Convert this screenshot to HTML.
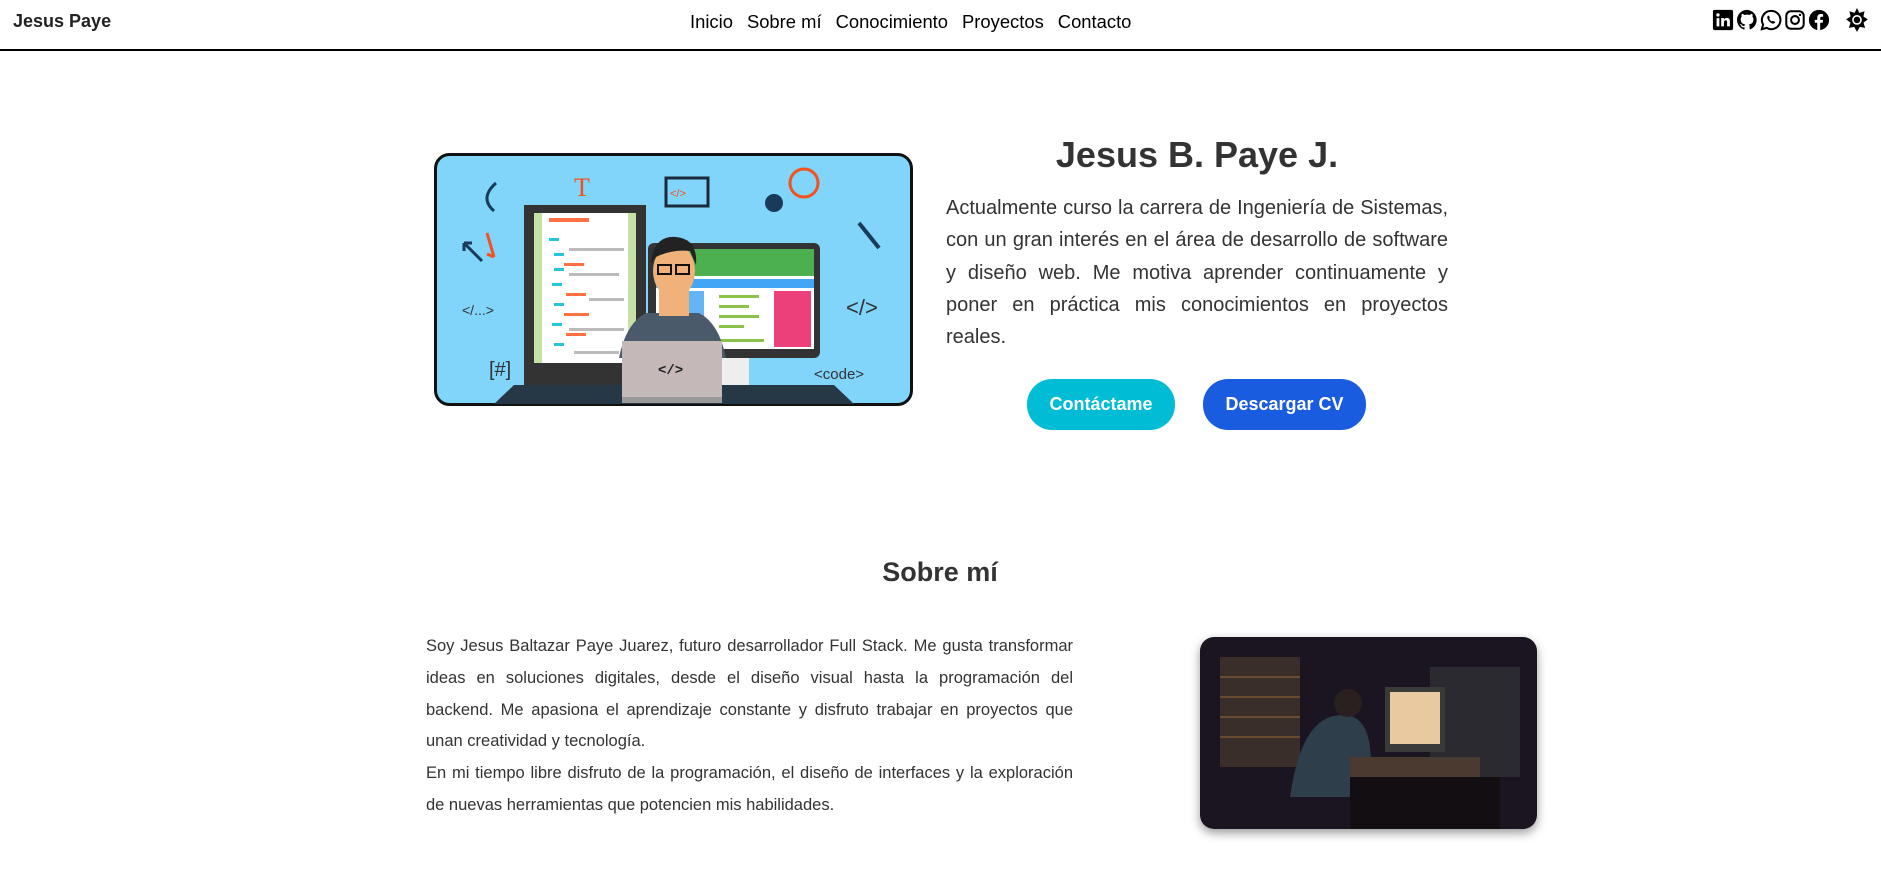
<!DOCTYPE html>
<html><head><meta charset="utf-8"><style>
*{margin:0;padding:0;box-sizing:border-box}
body{width:1881px;height:869px;background:#fff;font-family:"Liberation Sans",Arial,sans-serif;color:#333;position:relative;overflow:hidden}
.hdr{position:absolute;left:0;top:0;width:1881px;height:51px;border-bottom:2px solid #000}
.brand{position:absolute;left:13px;top:11px;font-size:18px;font-weight:bold;color:#222}
.nav{position:absolute;left:690px;top:11px;font-size:18.4px;color:#000;white-space:nowrap}
.nav span{margin-right:14px}
.icons{position:absolute;left:1712px;top:9px;display:flex;gap:2px}
.icons svg{width:22px;height:22px}
.abs{position:absolute}
h1{position:absolute;left:946px;width:502px;top:134px;text-align:center;font-size:36px;font-weight:bold;color:#333}
.p1{position:absolute;left:946px;top:192px;width:502px;font-size:20px;line-height:32.3px;text-align:justify;color:#333}
.btn{position:absolute;top:379px;height:51px;border-radius:25px;color:#fff;font-weight:bold;font-size:18px;display:flex;align-items:center;justify-content:center}
h2{position:absolute;left:740px;width:400px;top:557px;text-align:center;font-size:27px;font-weight:bold;color:#333}
.p2{position:absolute;left:426px;top:631px;width:647px;font-size:16.5px;line-height:31.8px;text-align:justify;color:#333}
</style></head><body>
<div class="hdr">
<div class="brand">Jesus Paye</div>
<div class="nav"><span>Inicio</span><span>Sobre mí</span><span>Conocimiento</span><span>Proyectos</span><span>Contacto</span></div>
<div class="icons">
<svg viewBox="0 0 24 24"><rect x="1" y="1" width="22" height="22" rx="2" fill="#000"/><rect x="5" y="10" width="3" height="9" fill="#fff"/><circle cx="6.5" cy="6.5" r="1.8" fill="#fff"/><path d="M10 10h3v1.5c.6-1 1.8-1.8 3.3-1.8 2.5 0 3.2 1.6 3.2 4V19h-3v-4.7c0-1.2-.3-2-1.5-2s-2 .9-2 2.2V19h-3z" fill="#fff"/></svg>
<svg viewBox="0 0 24 24"><path d="M12 1a11 11 0 0 0-3.5 21.4c.6.1.8-.2.8-.5v-2c-3 .7-3.7-1.4-3.7-1.4-.5-1.3-1.2-1.6-1.2-1.6-1-.7.1-.7.1-.7 1.1.1 1.7 1.1 1.7 1.1 1 1.7 2.6 1.2 3.2.9.1-.7.4-1.200.7-1.5-2.4-.3-5-1.2-5-5.4 0-1.2.4-2.2 1.1-3-.1-.3-.5-1.4.1-2.9 0 0 .9-.3 3 1.1a10 10 0 0 1 5.5 0c2.1-1.4 3-1.1 3-1.1.6 1.5.2 2.6.1 2.9.7.8 1.1 1.8 1.1 3 0 4.2-2.6 5.1-5 5.4.4.3.8 1 .8 2v3c0 .3.2.6.8.5A11 11 0 0 0 12 1z"/></svg>
<svg viewBox="0 0 24 24"><path d="M12 2a10 10 0 0 0-8.6 15L2 22l5.2-1.4A10 10 0 1 0 12 2z" fill="none" stroke="#000" stroke-width="2.2"/><path d="M8.5 7.5c.5-.5 1.2-.4 1.4.2l.8 1.8c.1.4-.3.9-.6 1.2.6 1.3 1.6 2.3 2.9 2.9.3-.3.8-.7 1.2-.6l1.8.8c.6.2.7.9.2 1.4-1.5 1.5-4 .5-5.8-1.3S7 9 8.5 7.5z"/></svg>
<svg viewBox="0 0 24 24"><rect x="2.5" y="2.5" width="19" height="19" rx="5" fill="none" stroke="#000" stroke-width="2.2"/><circle cx="12" cy="12" r="4.3" fill="none" stroke="#000" stroke-width="2.2"/><circle cx="17.5" cy="6.5" r="1.3"/></svg>
<svg viewBox="0 0 24 24"><circle cx="12" cy="12" r="11"/><path d="M13.3 23v-8h2.7l.4-3.1h-3.1v-2c0-.9.3-1.5 1.5-1.5h1.7V5.6c-.3 0-1.3-.1-2.4-.1-2.4 0-4 1.4-4 4.1v2.3H7.4V15h2.7v8z" fill="#fff"/></svg>
</div>
<svg class="abs" style="left:1844px;top:7px" width="26" height="28" viewBox="0 0 24 24"><path d="M12 0l2.2 4.5 4.8-1.5-1.1 4.9L22 10.5 18 13.5l1.5 4.8-4.9-.9L12 22l-2.6-4.6-4.9.9L6 13.5 2 10.5l4.1-2.6L5 3l4.8 1.5z"/><circle cx="12" cy="11" r="4.5" fill="#fff"/><circle cx="12" cy="11" r="3" fill="#000"/></svg>
</div>

<svg class="abs" style="left:434px;top:153px" width="479" height="253" viewBox="0 0 479 253">
<rect x="1.5" y="1.5" width="476" height="250" rx="14" fill="#81d4fa" stroke="#111" stroke-width="3"/>
<path d="M60 251 L80 232 H400 L420 251Z" fill="#263845"/>
<rect x="90" y="52" width="122" height="180" fill="#333"/>
<rect x="100" y="60" width="102" height="150" fill="#c5e1a5"/>
<rect x="108" y="60" width="86" height="150" fill="#fff"/>
<g fill="#26c6da"><rect x="115" y="85" width="10" height="3"/><rect x="120" y="100" width="10" height="3"/><rect x="120" y="115" width="10" height="3"/><rect x="118" y="130" width="10" height="3"/><rect x="120" y="150" width="10" height="3"/><rect x="118" y="170" width="10" height="3"/><rect x="120" y="190" width="10" height="3"/></g>
<g fill="#ff7043"><rect x="115" y="65" width="40" height="4"/><rect x="130" y="110" width="20" height="3"/><rect x="132" y="140" width="20" height="3"/><rect x="130" y="160" width="25" height="3"/><rect x="132" y="180" width="20" height="3"/></g>
<g fill="#bbb"><rect x="135" y="95" width="55" height="3"/><rect x="135" y="120" width="50" height="3"/><rect x="155" y="145" width="35" height="3"/><rect x="135" y="175" width="55" height="3"/><rect x="140" y="198" width="45" height="3"/></g>
<rect x="140" y="210" width="20" height="22" fill="#333"/>
<rect x="214" y="90" width="172" height="115" rx="6" fill="#333"/>
<rect x="222" y="96" width="158" height="100" fill="#fff"/>
<rect x="222" y="96" width="158" height="27" fill="#4caf50"/>
<rect x="222" y="126" width="158" height="9" fill="#42a5f5"/>
<rect x="225" y="138" width="45" height="56" fill="#64b5f6"/>
<rect x="340" y="138" width="37" height="56" fill="#ec407a"/>
<g fill="#8bc34a"><rect x="285" y="142" width="40" height="3"/><rect x="285" y="152" width="30" height="3"/><rect x="285" y="162" width="40" height="3"/><rect x="285" y="172" width="25" height="3"/><rect x="285" y="186" width="45" height="3"/></g>
<rect x="285" y="205" width="30" height="27" fill="#eee"/>
<path d="M185 205 Q192 170 212 160 L265 160 Q285 170 292 205 Z" fill="#4a5a6a"/>
<rect x="225" y="128" width="30" height="35" fill="#f0b27a"/>
<ellipse cx="240" cy="118" rx="21" ry="27" fill="#f0b27a"/>
<path d="M217 110 Q220 82 242 84 Q264 86 262 112 L256 98 Q238 96 222 104Z" fill="#222"/>
<rect x="224" y="112" width="13" height="9" fill="none" stroke="#111" stroke-width="2"/><rect x="242" y="112" width="13" height="9" fill="none" stroke="#111" stroke-width="2"/>
<rect x="188" y="188" width="100" height="58" fill="#c4b8b8"/>
<rect x="188" y="244" width="100" height="6" fill="#999"/>
<text x="224" y="221" font-size="14" font-family="Liberation Mono" font-weight="bold" fill="#222">&lt;/&gt;</text>
<rect x="232" y="25" width="42" height="28" fill="none" stroke="#1a2a3a" stroke-width="3"/>
<text x="236" y="44" font-size="11" fill="#f4511e">&lt;/&gt;</text>
<text x="140" y="43" font-size="26" font-family="Liberation Serif" fill="#f4511e">T</text>
<circle cx="370" cy="30" r="14" fill="none" stroke="#f4511e" stroke-width="3"/>
<circle cx="340" cy="50" r="9" fill="#1a3a5a"/>
<text x="28" y="162" font-size="14" fill="#333">&lt;/...&gt;</text>
<text x="412" y="162" font-size="22" fill="#333">&lt;/&gt;</text>
<text x="55" y="223" font-size="20" fill="#333">[#]</text>
<text x="380" y="226" font-size="15" fill="#333">&lt;code&gt;</text>
<path d="M30 90 L48 108 M30 90 v8 M30 90 h8" stroke="#1a3a5a" stroke-width="3" fill="none"/>
<path d="M48 88 L55 112 M55 112 l-7-3" stroke="#f4511e" stroke-width="3" fill="none" transform="translate(5 -8)"/>
<path d="M62 30 Q45 45 60 58" stroke="#1a3a5a" stroke-width="3" fill="none"/>
<path d="M425 70 L445 95" stroke="#1a3a5a" stroke-width="4"/>
</svg>

<h1>Jesus B. Paye J.</h1>
<div class="p1">Actualmente curso la carrera de Ingeniería de Sistemas, con un gran interés en el área de desarrollo de software y diseño web. Me motiva aprender continuamente y poner en práctica mis conocimientos en proyectos reales.</div>
<div class="btn" style="left:1027px;width:148px;background:#00bcd4">Contáctame</div>
<div class="btn" style="left:1203px;width:163px;background:#1a5ce0">Descargar CV</div>

<h2>Sobre mí</h2>
<div class="p2">Soy Jesus Baltazar Paye Juarez, futuro desarrollador Full Stack. Me gusta transformar ideas en soluciones digitales, desde el diseño visual hasta la programación del backend. Me apasiona el aprendizaje constante y disfruto trabajar en proyectos que unan creatividad y tecnología.<br>En mi tiempo libre disfruto de la programación, el diseño de interfaces y la exploración de nuevas herramientas que potencien mis habilidades.</div>

<svg class="abs" style="left:1200px;top:637px;border-radius:14px;box-shadow:0 4px 10px rgba(0,0,0,.4)" width="337" height="192" viewBox="0 0 337 192">
<rect width="337" height="192" fill="#1a1520"/>
<rect x="20" y="20" width="80" height="110" fill="#3a2e2a"/>
<g stroke="#6a4a30" stroke-width="2"><line x1="20" y1="40" x2="100" y2="40"/><line x1="20" y1="60" x2="100" y2="60"/><line x1="20" y1="80" x2="100" y2="80"/><line x1="20" y1="100" x2="100" y2="100"/></g>
<rect x="230" y="30" width="90" height="110" fill="#2a2a30"/>
<rect x="185" y="50" width="60" height="65" fill="#3a3a3a"/>
<rect x="190" y="55" width="50" height="52" fill="#e8c9a0"/>
<path d="M90 160 Q100 90 130 80 Q165 70 170 110 L175 160Z" fill="#2e3e4a"/>
<circle cx="148" cy="66" r="14" fill="#2a2020"/>
<rect x="150" y="120" width="130" height="20" fill="#4a3a30"/>
<rect x="150" y="140" width="150" height="52" fill="#120e12"/>
</svg>
</body></html>
